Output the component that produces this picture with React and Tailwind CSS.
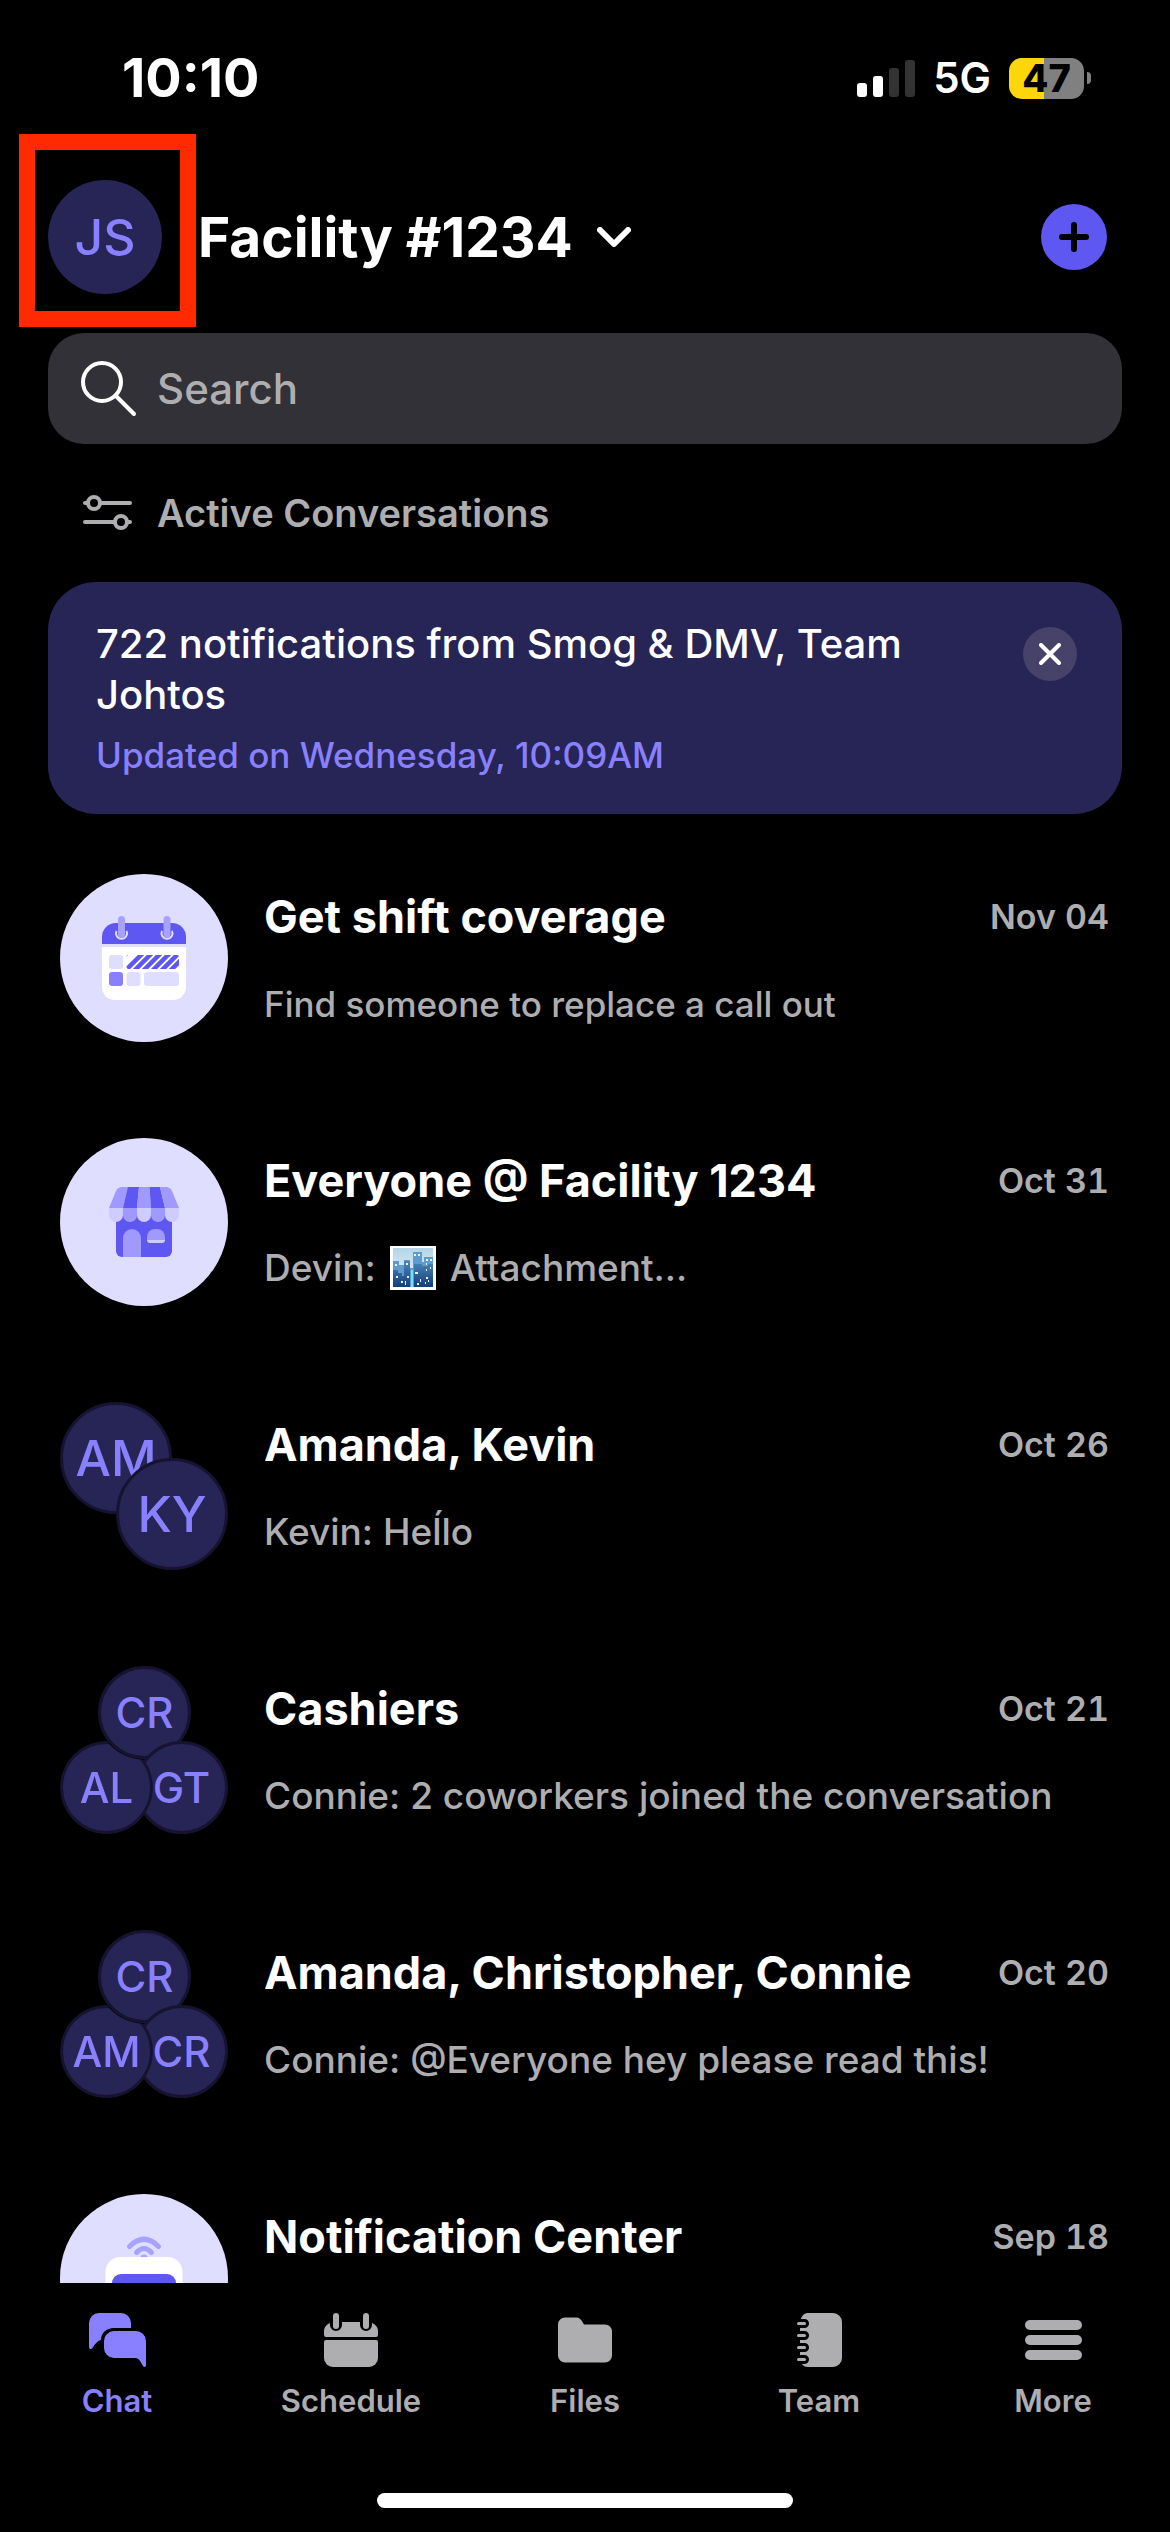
import React from 'react';

const ChatIcon = () => (
  <svg width="57" height="54" viewBox="0 0 57 54" fill="currentColor" aria-hidden="true">
    <path d="M10 0H32A10 10 0 0 1 42 10V15H25C17 15 12 20 12 27C8 28 6 31 3.500 35C2 37 0 36 0 34V10A10 10 0 0 1 10 0Z" />
    <path d="M25 18H47A10 10 0 0 1 57 28V52.500C57 54 55 54.500 54 53C51.500 49 50.500 45 46 45H25A10 10 0 0 1 15 35V28A10 10 0 0 1 25 18Z" />
  </svg>
);

const ScheduleIcon = () => (
  <svg width="54" height="54" viewBox="0 0 54 54" fill="currentColor" aria-hidden="true">
    <path d="M6 10V12A6 6 0 0 0 18 12V9H36V12A6 6 0 0 0 48 12V10C52 11.500 54 15 54 18V22A2 2 0 0 1 52 24H2A2 2 0 0 1 0 22V18C0 15 2 11.500 6 10Z" />
    <path d="M2 27H52A2 2 0 0 1 54 29V45A9 9 0 0 1 45 54H9A9 9 0 0 1 0 45V29A2 2 0 0 1 2 27Z" />
    <rect x="9" y="0" width="6" height="16" rx="3" />
    <rect x="39" y="0" width="6" height="16" rx="3" />
  </svg>
);

const FilesIcon = () => (
  <svg width="54" height="54" viewBox="0 0 54 54" fill="currentColor" aria-hidden="true">
    <path d="M7 4.500H18C22 4.500 23 6.500 26 11.500H47A7 7 0 0 1 54 18.500V42.500A7 7 0 0 1 47 49.500H7A7 7 0 0 1 0 42.500V11.500A7 7 0 0 1 7 4.500Z" />
  </svg>
);

const TeamIcon = () => (
  <svg width="45" height="54" viewBox="0 0 45 54" fill="currentColor" aria-hidden="true">
    <path d="M11 0H36A9 9 0 0 1 45 9V45A9 9 0 0 1 36 54H11C8 54 6 53 5 51H7.500A4.500 4.500 0 0 0 7.500 42H3V39H7.500A4.500 4.500 0 0 0 7.500 30H3V27H7.500A4.500 4.500 0 0 0 7.500 18H3V15H7.500A4.500 4.500 0 0 0 7.500 6H4C5 2 8 0 11 0Z" />
    <rect x="0" y="9" width="9" height="3" rx="1.500" />
    <rect x="0" y="21" width="9" height="3" rx="1.500" />
    <rect x="0" y="33" width="9" height="3" rx="1.500" />
    <rect x="0" y="45" width="9" height="3" rx="1.500" />
  </svg>
);

const MoreIcon = () => (
  <svg width="57" height="54" viewBox="0 0 57 54" fill="currentColor" aria-hidden="true">
    <rect x="0" y="7" width="57" height="10" rx="5" />
    <rect x="0" y="22" width="57" height="10" rx="5" />
    <rect x="0" y="37" width="57" height="10" rx="5" />
  </svg>
);

const CalendarArt = () => (
  <svg className="size-full" viewBox="0 0 168 168" aria-hidden="true">
    <path d="M42 73H126V113A13 13 0 0 1 113 126H55A13 13 0 0 1 42 113Z" fill="#fff" />
    <path d="M42 70V63A14 14 0 0 1 56 49H112A14 14 0 0 1 126 63V70Z" fill="#5e57f2" />
    <path d="M56.500 57A5.500 5.500 0 1 0 66.500 57" fill="none" stroke="#e0deff" strokeWidth="2" />
    <path d="M102 57A5.500 5.500 0 1 0 112 57" fill="none" stroke="#e0deff" strokeWidth="2" />
    <rect x="58" y="42" width="7" height="22" rx="3.500" fill="#a7a1ff" />
    <rect x="103.500" y="42" width="7" height="22" rx="3.500" fill="#a7a1ff" />
    <rect x="49" y="81" width="14" height="14" rx="3" fill="#e0deff" />
    <rect x="49" y="98" width="14" height="14" rx="3" fill="#8880ff" />
    <rect x="66.500" y="98" width="14" height="14" rx="3" fill="#e0deff" />
    <rect x="84" y="98" width="35" height="14" rx="3" fill="#e0deff" />
    <clipPath id="shift-bar">
      <rect x="66.500" y="81" width="52.500" height="14" rx="2" />
    </clipPath>
    <g clipPath="url(#shift-bar)" stroke="#5e57f2" strokeWidth="4.500">
      <path d="M58 88L72 74M62 100L86 76M71 100L95 76M80 100L104 76M89 100L113 76M98 100L122 76M107 100L131 76" />
    </g>
  </svg>
);

const StoreArt = () => (
  <svg className="size-full" viewBox="0 0 168 168" aria-hidden="true">
    <path d="M56 74H112V113A6 6 0 0 1 106 119H62A6 6 0 0 1 56 113Z" fill="#5e57f2" />
    <path d="M62 49H69L63 70H49L56 53Q58 49 62 49Z" fill="#a09aff" />
    <path d="M68 49H79L77 70H63Z" fill="#5e57f2" />
    <path d="M79 49H89.500L91 70H77Z" fill="#a09aff" />
    <path d="M89.500 49H100L105 70H91Z" fill="#5e57f2" />
    <path d="M100 49H106Q110 49 112 53L119 70H105Z" fill="#a09aff" />
    <path d="M49 70H63V77A7 7 0 0 1 49 77Z" fill="#cfccff" />
    <path d="M63 70H77V77A7 7 0 0 1 63 77Z" fill="#a09aff" />
    <path d="M77 70H91V77A7 7 0 0 1 77 77Z" fill="#cfccff" />
    <path d="M91 70H105V77A7 7 0 0 1 91 77Z" fill="#a09aff" />
    <path d="M105 70H119V77A7 7 0 0 1 105 77Z" fill="#cfccff" />
    <path d="M63 119V100A9 9 0 0 1 81 100V119Z" fill="#a09aff" />
    <path d="M87 102V99A8 8 0 0 1 95 91H97A8 8 0 0 1 105 99V102Z" fill="#a09aff" />
    <path d="M87 102H105A3 3 0 0 1 102 105H90A3 3 0 0 1 87 102Z" fill="#cfccff" />
  </svg>
);

const BroadcastArt = () => (
  <svg className="size-full" viewBox="0 0 168 168" aria-hidden="true">
    <g fill="none" stroke="#a7a1ff" strokeWidth="5" strokeLinecap="round">
      <path d="M69.500 52.500Q84 38 98.500 52.500" />
      <path d="M76.500 58.500Q84 50.500 91.500 58.500" />
    </g>
    <circle cx="84" cy="64" r="3.500" fill="#a7a1ff" />
    <rect x="45.500" y="63" width="77" height="70" rx="15" fill="#fff" />
    <rect x="52" y="80" width="64" height="46" rx="9" fill="#5e57f2" />
  </svg>
);

// little framed skyline shown before "Attachment..."
const CityIcon = () => (
  <svg width="46" height="44" viewBox="0 0 46 44" role="img" aria-label="Photo">
    <defs>
      <linearGradient id="sky" x1="0" y1="0" x2="0" y2="1">
        <stop offset="0" stopColor="#b4d5e8" />
        <stop offset="1" stopColor="#f0f7fa" />
      </linearGradient>
      <linearGradient id="tower" x1="0" y1="0" x2="0" y2="1">
        <stop offset="0" stopColor="#4e86bd" />
        <stop offset="1" stopColor="#123f7a" />
      </linearGradient>
    </defs>
    <rect width="46" height="44" fill="#fff" />
    <rect x="3" y="2" width="40" height="39" fill="url(#sky)" />
    <path d="M3 15H9V19H14V14H20V22H23V6H32V16H34V11H43V41H3Z" fill="#5f9bcd" />
    <path d="M3 24H8V27H12V30H14V15H20V41H3ZM24 18H32V20H38V18H43V41H24Z" fill="url(#tower)" />
    <path d="M21 24H23V41H21Z" fill="#6ee0f5" />
    <g fill="#e8f3fa">
      <path d="M5 18H7V20H5ZM16 17H18V19H16ZM24 8H26V10H24ZM28 8H30V10H28ZM36 13H38V15H36ZM40 13H42V15H40ZM36 17H37V19H36Z" />
      <path d="M25 26H28V28H25ZM36 23H37V25H36ZM40 21H41V23H40ZM6 30H8V32H6ZM17 30H19V32H17ZM11 35H13V37H11ZM15 35H16V39H15ZM30 33H31V36H30ZM27 37H29V39H27ZM36 31H38V33H36ZM35 36H36V38H35ZM38 34H39V36H38Z" />
    </g>
  </svg>
);

const Initials = ({ text, className }) => (
  <span
    className={`absolute flex items-center justify-center rounded-full border-[3px] border-[#151330] bg-[#272456] font-medium text-[#8880ff] ${className}`}
  >
    {text}
  </span>
);

const PairAvatar = ({ names }) => (
  <div className="relative size-[168px] shrink-0 text-[50px]">
    <Initials text={names[0]} className="left-0 top-0 size-28" />
    <Initials text={names[1]} className="bottom-0 right-0 size-28" />
  </div>
);

const TrioAvatar = ({ names }) => (
  <div className="relative size-[168px] shrink-0 text-[42px]">
    <Initials text={names[0]} className="left-[38px] top-0 size-[93px]" />
    <Initials text={names[2]} className="bottom-0 right-0 size-[93px]" />
    {/* left circle is cut away where the top one overlaps it */}
    <Initials
      text={names[1]}
      className="bottom-0 left-0 size-[93px] [mask-clip:border-box] [mask-origin:border-box] [mask-image:radial-gradient(circle_at_84px_-28px,transparent_46px,black_47px)]"
    />
  </div>
);

const ArtAvatar = ({ children }) => (
  <div className="size-[168px] shrink-0 overflow-hidden rounded-full bg-[#e0deff]">{children}</div>
);

const conversations = [
  {
    title: 'Get shift coverage',
    date: 'Nov 04',
    preview: 'Find someone to replace a call out',
    hint: true,
    avatar: <ArtAvatar><CalendarArt /></ArtAvatar>,
  },
  {
    title: 'Everyone @ Facility 1234',
    date: 'Oct 31',
    preview: <>Devin: <CityIcon /> Attachment...</>,
    avatar: <ArtAvatar><StoreArt /></ArtAvatar>,
  },
  {
    title: 'Amanda, Kevin',
    date: 'Oct 26',
    preview: 'Kevin: Heĺlo',
    avatar: <PairAvatar names={['AM', 'KY']} />,
  },
  {
    title: 'Cashiers',
    date: 'Oct 21',
    preview: 'Connie: 2 coworkers joined the conversation',
    avatar: <TrioAvatar names={['CR', 'AL', 'GT']} />,
  },
  {
    title: 'Amanda, Christopher, Connie',
    date: 'Oct 20',
    preview: 'Connie: @Everyone hey please read this!',
    avatar: <TrioAvatar names={['CR', 'AM', 'CR']} />,
  },
  {
    title: 'Notification Center',
    date: 'Sep 18',
    preview: '',
    avatar: <ArtAvatar><BroadcastArt /></ArtAvatar>,
  },
];

const tabs = [
  { label: 'Chat', icon: <ChatIcon />, active: true },
  { label: 'Schedule', icon: <ScheduleIcon /> },
  { label: 'Files', icon: <FilesIcon /> },
  { label: 'Team', icon: <TeamIcon /> },
  { label: 'More', icon: <MoreIcon /> },
];

const StatusBar = () => (
  <div className="flex h-[156px] shrink-0 items-center justify-between pl-[122px] pr-[79px]">
    <span className="text-[54px] font-bold leading-none">10:10</span>
    <div className="flex items-center">
      <div className="flex h-[37px] items-end gap-1.5">
        <span className="h-3.5 w-2.5 rounded-[3px] bg-white" />
        <span className="h-[21px] w-2.5 rounded-[3px] bg-white" />
        <span className="h-[29px] w-2.5 rounded-[3px] bg-[#333333]" />
        <span className="h-[37px] w-2.5 rounded-[3px] bg-[#333333]" />
      </div>
      <span className="ml-[18px] text-[42px] font-semibold leading-none">5G</span>
      <div className="ml-[18px] flex h-[41px] w-[75px] items-center justify-center rounded-[13px] bg-[linear-gradient(to_right,#ffd60a_47%,#808080_47%)]">
        <span className="text-[38px] font-extrabold leading-none text-black">47</span>
      </div>
      <span className="ml-[3px] h-3 w-1 rounded-r-full bg-[#808080]" />
    </div>
  </div>
);

const Header = () => (
  <header className="flex h-[162px] shrink-0 items-center pl-12 pr-[63px]">
    <button className="relative flex size-[114px] items-center justify-center rounded-full bg-[#272456] text-[50px] font-medium text-[#8880ff]">
      JS
      <span className="absolute -left-[29px] -top-[46px] h-[193px] w-[177px] border-16 border-[#ff2a00]" />
    </button>
    <button className="ml-9 flex items-center gap-6">
      <h1 className="text-[55px] font-bold leading-none">Facility #1234</h1>
      <svg width="34" height="20" viewBox="0 0 34 20" fill="none" stroke="#fff" strokeWidth="6" strokeLinecap="round" strokeLinejoin="round" aria-hidden="true">
        <path d="M3 3L17 17L31 3" />
      </svg>
    </button>
    <button aria-label="New" className="ml-auto flex size-[66px] items-center justify-center rounded-full bg-[#5e57f2]">
      <svg width="30" height="30" viewBox="0 0 30 30" stroke="#000" strokeWidth="6" strokeLinecap="round" aria-hidden="true">
        <path d="M15 3V27M3 15H27" />
      </svg>
    </button>
  </header>
);

const Banner = () => (
  <section className="mx-12 flex items-start justify-between rounded-[48px] bg-[#272456] pb-[34px] pl-12 pr-[45px] pt-9">
    <div>
      <p className="max-w-[860px] text-[40px] font-medium leading-[51px]">
        722 notifications from Smog &amp; DMV, Team Johtos
      </p>
      <p className="mt-2.5 text-[35px] font-medium leading-[50px] text-[#8880ff]">Updated on Wednesday, 10:09AM</p>
    </div>
    <button aria-label="Dismiss" className="mt-[9px] flex size-[54px] items-center justify-center rounded-full bg-[#474269]">
      <svg width="22" height="22" viewBox="0 0 22 22" stroke="#fff" strokeWidth="4" strokeLinecap="round" aria-hidden="true">
        <path d="M2 2L20 20M20 2L2 20" />
      </svg>
    </button>
  </section>
);

const ConversationRow = ({ title, date, preview, hint, avatar }) => (
  <li className="flex h-66 items-center gap-9 pl-15 pr-[61px]">
    {avatar}
    <div className="flex min-w-0 flex-1 flex-col gap-8">
      <div className="flex items-center justify-between">
        <h2 className="text-[45px] font-bold leading-[60px]">{title}</h2>
        <span className="text-[34px] font-semibold leading-[60px] tabular-nums text-[#aeaeb0]">{date}</span>
      </div>
      <p
        className={`flex h-[50px] items-center gap-3.5 whitespace-nowrap font-medium text-[#aeaeb0] ${hint ? 'text-[35px]' : 'text-[37px]'}`}
      >
        {preview}
      </p>
    </div>
  </li>
);

const TabBar = () => (
  <nav className="shrink-0 bg-black pb-6 pt-[30px]">
    <div className="grid grid-cols-5">
      {tabs.map(({ label, icon, active }) => (
        <a
          key={label}
          href={`#${label.toLowerCase()}`}
          className={`flex flex-col items-center gap-3.5 text-[31px] font-semibold leading-10 ${active ? 'text-[#8880ff]' : 'text-[#aeaeb0]'}`}
        >
          {icon}
          {label}
        </a>
      ))}
    </div>
    <div className="mx-auto mt-[72px] h-[15px] w-[416px] rounded-full bg-white" />
  </nav>
);

const App = () => {
  return (
    <div className="flex h-screen flex-col overflow-hidden bg-black font-['Inter','Liberation_Sans',sans-serif] text-white">
      <StatusBar />
      <Header />
      <label className="mx-12 mt-[15px] flex h-[111px] shrink-0 items-center gap-5 rounded-[36px] bg-[#323137] pl-[33px] pr-8">
        <svg width="56" height="56" viewBox="0 0 56 56" fill="none" stroke="#fff" strokeWidth="4" strokeLinecap="round" aria-hidden="true">
          <circle cx="21" cy="21" r="19" />
          <path d="M34.500 34.500L53 53" />
        </svg>
        <input
          type="search"
          aria-label="Search"
          placeholder="Search"
          className="min-w-0 flex-1 bg-transparent text-[42px] font-medium outline-none placeholder:text-[#aeaeb0]"
        />
      </label>
      <button className="mx-12 flex h-[138px] shrink-0 items-center gap-6 pl-[35px] text-[38px] font-semibold text-[#aeaeb0]">
        <svg width="50" height="36" viewBox="0 0 50 36" fill="none" stroke="currentColor" strokeWidth="4" strokeLinecap="round" aria-hidden="true">
          <circle cx="11" cy="8" r="6" />
          <path d="M2 8H5M17 8H47M2 27H32M45 27H47" />
          <circle cx="38" cy="27" r="6" />
        </svg>
        Active Conversations
      </button>
      <Banner />
      <ul className="mt-3 min-h-0 flex-1 overflow-hidden">
        {conversations.map((item) => (
          <ConversationRow key={item.title} {...item} />
        ))}
      </ul>
      <TabBar />
    </div>
  );
};

export default App;
